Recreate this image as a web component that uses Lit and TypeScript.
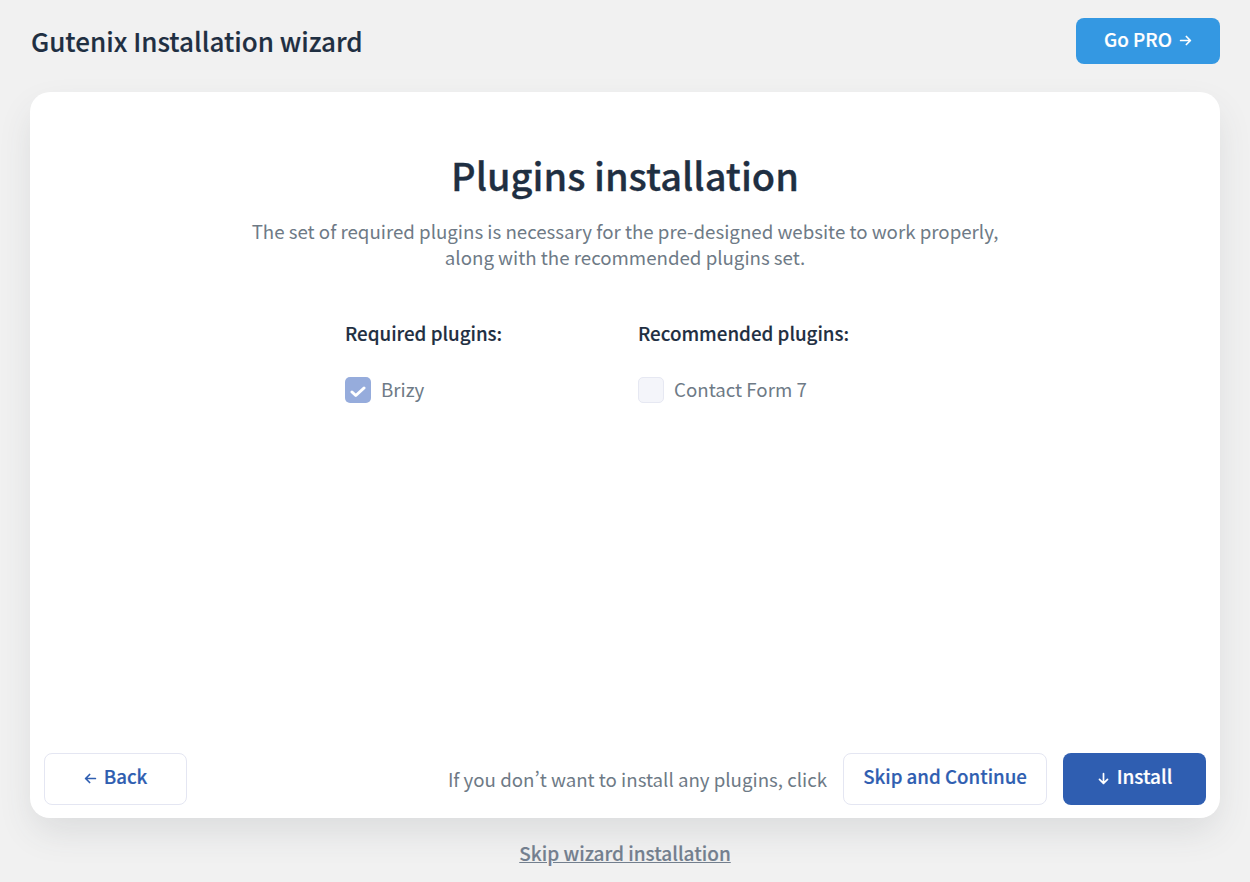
import { LitElement, html, css } from "lit";
import { customElement } from "lit/decorators.js";

const arrow = (d: string) => html`<svg class="ico" viewBox="0 0 12 12" fill="none" stroke="currentColor" stroke-width="1.6" stroke-linecap="round" stroke-linejoin="round"><path d=${d}></path></svg>`;

@customElement("app-root")
export class AppRoot extends LitElement {
  static styles = css`
    :host { display: block; height: 882px; background: #f1f1f1; overflow: hidden;
      font-family: "Noto Sans CJK SC", "Noto Sans", sans-serif; color: #1f2f42; }
    .page { padding: 18px 30px 0; display: flex; flex-direction: column; }
    .top { display: flex; justify-content: space-between; align-items: center; height: 46px; margin-bottom: 28px; }
    .title { font-size: 26px; font-weight: 500; line-height: 46px; padding: 0 0 1px 1px; -webkit-text-stroke: 0.15px currentColor; }
    .btn { display: inline-flex; align-items: center; justify-content: center; gap: 7px; box-sizing: border-box;
      border-radius: 8px; font-size: 18.7px; font-weight: 500; height: 52px; padding-bottom: 8px; white-space: nowrap; -webkit-text-stroke: 0.2px currentColor; }
    .ico { width: 13px; height: 13px; flex: none; margin-top: 7px; }
    .pro { width: 144px; height: 46px; background: #3498e2; color: #fff; font-size: 18.9px; padding-bottom: 6px; }
    .pro .ico { margin-top: 5px; }
    .card { height: 726px; box-sizing: border-box; background: #fff; border-radius: 20px;
      box-shadow: 0 16px 36px -4px rgba(60, 70, 80, 0.13); padding: 0 14px 13px; display: flex; flex-direction: column; }
    .body { flex: 1; display: flex; flex-direction: column; align-items: center; padding-top: 55px; }
    h1 { margin: 0; font-size: 38px; font-weight: 500; line-height: 56px; -webkit-text-stroke: 0.3px currentColor; }
    .desc { margin: 15px 0 0; font-size: 18.7px; line-height: 26px; color: #6e7a86; text-align: center; }
    .cols { display: flex; margin-top: 50px; align-self: flex-start; margin-left: 301px; }
    .col { display: flex; flex-direction: column; gap: 30px; }
    .col.req { width: 293px; }
    h3 { margin: 0; font-size: 18.75px; font-weight: 500; line-height: 26px; -webkit-text-stroke: 0.15px currentColor; }
    .opt { display: flex; align-items: center; gap: 10px; font-size: 18.7px; line-height: 26px; color: #6e7a86; }
    .box { width: 26px; height: 26px; box-sizing: border-box; border-radius: 5px; display: flex; align-items: center; justify-content: center; flex: none; margin: 1px 0 -1px; }
    .box.on { background: #96acdc; }
    .box.off { background: #f4f5fa; border: 1px solid #e6e8f2; }
    .check { margin-top: 3px; }
    .foot { display: flex; align-items: center; }
    .ghost { background: #fff; border: 1px solid #e4e6f2; color: #2f5eb1; }
    .back { width: 143px; }
    .note { margin-left: auto; margin-right: 16px; padding-bottom: 2px; font-size: 18.7px; color: #6e7a86; font-variant-east-asian: proportional-width; }
    .skip { width: 204px; margin-right: 16px; }
    .install { width: 143px; background: #2f5eb1; color: #fff; font-size: 19px; }
    .wizard { margin-top: 21px; text-align: center; font-size: 19px; font-weight: 500; line-height: 28px; color: #737f8e; text-decoration: underline; -webkit-text-stroke: 0.15px currentColor; }
  `;

  render() {
    return html`<div class="page">
      <header class="top">
        <div class="title">Gutenix Installation wizard</div>
        <div class="btn pro">Go PRO ${arrow("M1.5 6h9M6.8 2.3 10.5 6 6.8 9.7")}</div>
      </header>
      <main class="card">
        <div class="body">
          <h1>Plugins installation</h1>
          <p class="desc">The set of required plugins is necessary for the pre-designed website to work properly,<br />along with the recommended plugins set.</p>
          <div class="cols">
            <div class="col req">
              <h3>Required plugins:</h3>
              <div class="opt"><span class="box on"><svg class="check" width="16" height="13" viewBox="0 0 16 13" fill="none" stroke="#fff" stroke-width="3" stroke-linecap="round" stroke-linejoin="round"><path d="M2 7 5.8 10.5 14 3"></path></svg></span>Brizy</div>
            </div>
            <div class="col">
              <h3>Recommended plugins:</h3>
              <div class="opt"><span class="box off"></span>Contact Form 7</div>
            </div>
          </div>
        </div>
        <div class="foot">
          <div class="btn ghost back">${arrow("M10.5 6h-9M5.2 2.3 1.5 6l3.7 3.7")} Back</div>
          <span class="note">If you don’t want to install any plugins, click</span>
          <div class="btn ghost skip">Skip and Continue</div>
          <div class="btn install">${arrow("M6 1.5v9M2.3 6.8 6 10.5l3.7-3.7")} Install</div>
        </div>
      </main>
      <div class="wizard">Skip wizard installation</div>
    </div>`;
  }
}
